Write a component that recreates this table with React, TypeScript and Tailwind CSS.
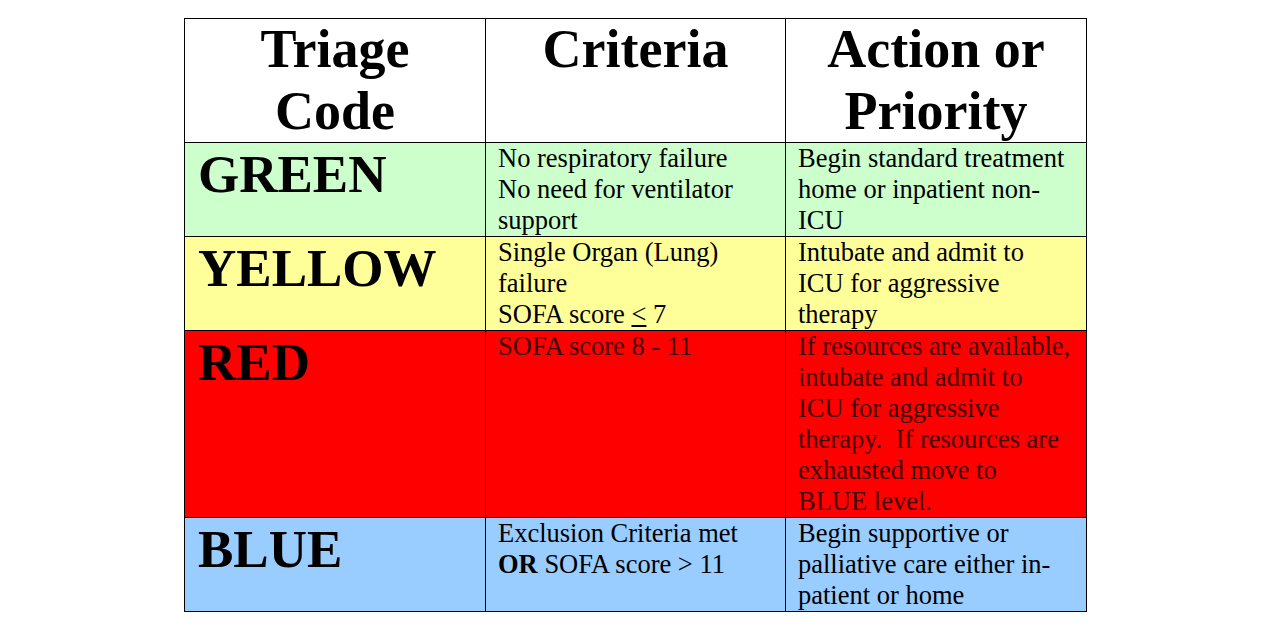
import * as React from "react";

const serif = { fontFamily: '"Liberation Serif", "Times New Roman", serif' };

const rows = [
  {
    code: "GREEN",
    bg: "bg-[#ccffcc]",
    text: "text-black",
    criteria: (
      <>
        No respiratory failure
        <br />
        No need for ventilator
        <br />
        support
      </>
    ),
    action: (
      <>
        Begin standard treatment
        <br />
        home or inpatient non-
        <br />
        ICU
      </>
    ),
  },
  {
    code: "YELLOW",
    bg: "bg-[#ffff99]",
    text: "text-black",
    criteria: (
      <>
        Single Organ (Lung)
        <br />
        failure
        <br />
        SOFA score <span className="underline underline-offset-2">&lt;</span> 7
      </>
    ),
    action: (
      <>
        Intubate and admit to
        <br />
        ICU for aggressive
        <br />
        therapy
      </>
    ),
  },
  {
    code: "RED",
    bg: "bg-[#ff0000]",
    text: "text-[#400000]",
    criteria: <>SOFA score 8 - 11</>,
    action: (
      <>
        If resources are available,
        <br />
        intubate and admit to
        <br />
        ICU for aggressive
        <br />
        therapy.&nbsp; If resources are
        <br />
        exhausted move to
        <br />
        BLUE level.
      </>
    ),
  },
  {
    code: "BLUE",
    bg: "bg-[#99ccff]",
    text: "text-black",
    criteria: (
      <>
        Exclusion Criteria met
        <br />
        <b>OR</b> SOFA score &gt; 11
      </>
    ),
    action: (
      <>
        Begin supportive or
        <br />
        palliative care either in-
        <br />
        patient or home
      </>
    ),
  },
];

export default function App() {
  return (
    <div className="w-[1280px] h-[634px] bg-white pt-[18px] pl-[184px]" style={serif}>
      <table className="table-fixed border-collapse border border-black w-[902px]">
        <colgroup>
          <col className="w-[301px]" />
          <col className="w-[300px]" />
          <col className="w-[301px]" />
        </colgroup>
        <thead>
          <tr className="bg-white">
            <th className="border border-black align-top text-center font-bold text-[54px] leading-[61.5px] px-2">
              Triage
              <br />
              Code
            </th>
            <th className="border border-black align-top text-center font-bold text-[54px] leading-[61.5px] px-2">
              Criteria
            </th>
            <th className="border border-black align-top text-center font-bold text-[54px] leading-[61.5px] px-2">
              Action or
              <br />
              Priority
            </th>
          </tr>
        </thead>
        <tbody>
          {rows.map((r) => (
            <tr key={r.code} className={r.bg}>
              <td className="border border-black align-top font-bold text-[53px] leading-[62px] pl-[13px] text-black">
                {r.code}
              </td>
              <td className={"border border-black align-top text-[26.5px] leading-[31px] pl-3 pr-1 whitespace-nowrap " + r.text}>
                {r.criteria}
              </td>
              <td className={"border border-black align-top text-[26.5px] leading-[31px] pl-3 pr-1 whitespace-nowrap " + r.text}>
                {r.action}
              </td>
            </tr>
          ))}
        </tbody>
      </table>
    </div>
  );
}
